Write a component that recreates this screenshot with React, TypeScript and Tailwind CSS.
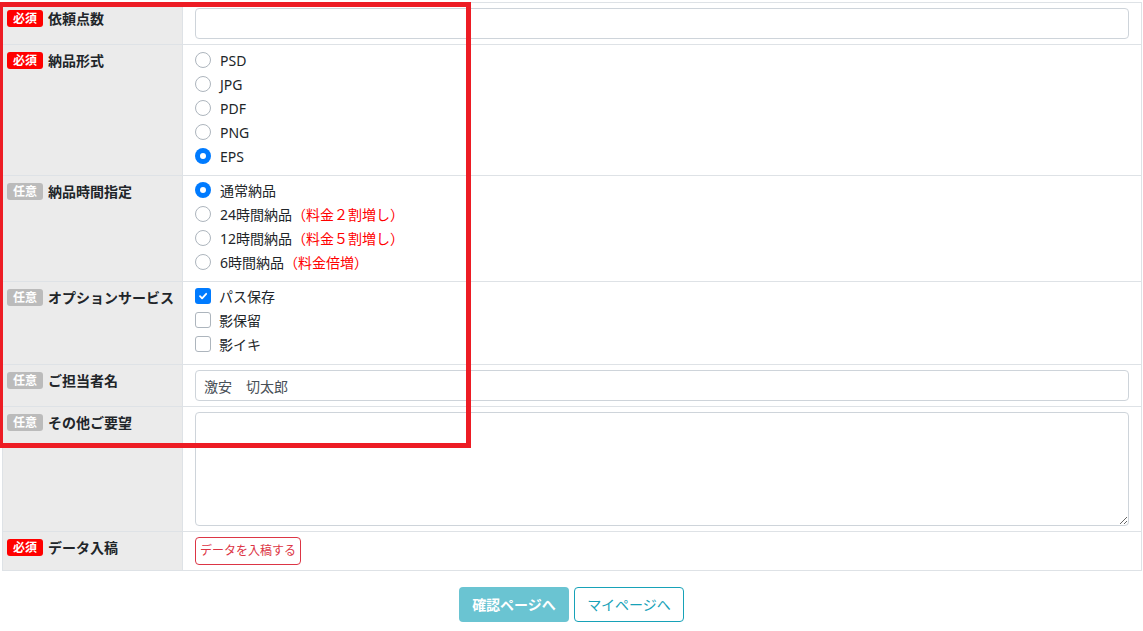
import React from 'react';

const font = 'font-["Noto_Sans","Noto_Sans_CJK_JP",sans-serif]';

// Badge shown before each label
const Badge: React.FC<{ required?: boolean }> = ({ required }) => (
  <span
    className={`inline-flex h-[17px] w-[36px] shrink-0 items-center justify-center rounded-[3px] text-[12px] font-bold leading-none text-white ${
      required ? 'bg-[#ff0000]' : 'bg-[#bbbbbb]'
    }`}
  >
    {required ? '必須' : '任意'}
  </span>
);

const Label: React.FC<{ required?: boolean; text: string }> = ({ required, text }) => (
  <div className="w-[180px] shrink-0 border-r border-[#dee2e6] bg-[#ebebeb] pl-[4px] pt-[7px]">
    <div className="flex items-center gap-[5px]">
      <Badge required={required} />
      <span className="text-[14px] font-bold leading-[16px] text-[#212529]">{text}</span>
    </div>
  </div>
);

const Radio: React.FC<{ checked?: boolean; children: React.ReactNode }> = ({ checked, children }) => (
  <label className="flex h-[24px] items-center gap-[9px] text-[14px] text-[#212529]">
    {checked ? (
      <span className="flex h-[16px] w-[16px] items-center justify-center rounded-full bg-[#007bff]">
        <span className="h-[6px] w-[6px] rounded-full bg-white" />
      </span>
    ) : (
      <span className="h-[16px] w-[16px] rounded-full border border-[#adb5bd] bg-white" />
    )}
    <span>{children}</span>
  </label>
);

const Check: React.FC<{ checked?: boolean; children: React.ReactNode }> = ({ checked, children }) => (
  <label className="flex h-[24px] items-center gap-[8px] text-[14px] text-[#212529]">
    {checked ? (
      <span className="flex h-[16px] w-[16px] items-center justify-center rounded-[3px] bg-[#007bff]">
        <svg width="10" height="10" viewBox="0 0 10 10" fill="none">
          <path d="M2 5.2 4.1 7.3 8.2 2.8" stroke="white" strokeWidth="1.8" strokeLinecap="round" strokeLinejoin="round" />
        </svg>
      </span>
    ) : (
      <span className="h-[16px] w-[16px] rounded-[3px] border border-[#adb5bd] bg-white" />
    )}
    <span>{children}</span>
  </label>
);

const Extra: React.FC<{ children: React.ReactNode }> = ({ children }) => (
  <span className="text-[#ff0000]">{children}</span>
);

export default function App() {
  return (
    <div className={`relative min-h-[631px] w-[1143px] bg-white ${font}`}>
      {/* Form table */}
      <div className="ml-[2px] mt-[2px] w-[1140px] border border-[#dee2e6]">
        {/* 依頼点数 */}
        <div className="flex border-b border-[#dee2e6]">
          <Label required text="依頼点数" />
          <div className="flex-1 py-[5px] pl-[12px] pr-[12px]">
            <input className="h-[31px] w-full rounded-[4px] border border-[#ced4da] px-[8px] text-[14px] outline-none" />
          </div>
        </div>

        {/* 納品形式 */}
        <div className="flex border-b border-[#dee2e6]">
          <Label required text="納品形式" />
          <div className="flex-1 pb-[7px] pl-[12px] pt-[3px]">
            <Radio>PSD</Radio>
            <Radio>JPG</Radio>
            <Radio>PDF</Radio>
            <Radio>PNG</Radio>
            <Radio checked>EPS</Radio>
          </div>
        </div>

        {/* 納品時間指定 */}
        <div className="flex border-b border-[#dee2e6]">
          <Label text="納品時間指定" />
          <div className="flex-1 pb-[7px] pl-[12px] pt-[2px]">
            <Radio checked>通常納品</Radio>
            <Radio>
              24時間納品<Extra>（料金２割増し）</Extra>
            </Radio>
            <Radio>
              12時間納品<Extra>（料金５割増し）</Extra>
            </Radio>
            <Radio>
              6時間納品<Extra>（料金倍増）</Extra>
            </Radio>
          </div>
        </div>

        {/* オプションサービス */}
        <div className="flex border-b border-[#dee2e6]">
          <Label text="オプションサービス" />
          <div className="flex-1 pb-[8px] pl-[12px] pt-[2px]">
            <Check checked>パス保存</Check>
            <Check>影保留</Check>
            <Check>影イキ</Check>
          </div>
        </div>

        {/* ご担当者名 */}
        <div className="flex border-b border-[#dee2e6]">
          <Label text="ご担当者名" />
          <div className="flex-1 py-[5px] pl-[12px] pr-[12px]">
            <input
              defaultValue="激安　切太郎"
              className="h-[31px] w-full rounded-[4px] border border-[#ced4da] px-[8px] text-[14px] text-[#495057] outline-none"
            />
          </div>
        </div>

        {/* その他ご要望 */}
        <div className="flex border-b border-[#dee2e6]">
          <Label text="その他ご要望" />
          <div className="flex-1 py-[5px] pl-[12px] pr-[12px]">
            <textarea className="block h-[114px] w-full rounded-[4px] border border-[#ced4da] px-[8px] text-[14px] outline-none" />
          </div>
        </div>

        {/* データ入稿 */}
        <div className="flex">
          <Label required text="データ入稿" />
          <div className="flex-1 py-[5px] pl-[12px]">
            <button className="h-[28px] rounded-[4px] border border-[#dc3545] bg-white px-[4px] text-[12px] text-[#dc3545]">
              データを入稿する
            </button>
          </div>
        </div>
      </div>

      {/* Footer buttons */}
      <div className="mt-[16px] flex justify-center gap-[5px]">
        <button className="h-[35px] w-[110px] rounded-[4px] bg-[#6ac4d2] text-[14px] font-bold text-white">
          確認ページへ
        </button>
        <button className="h-[35px] w-[110px] rounded-[4px] border border-[#17a2b8] bg-white text-[14px] text-[#17a2b8]">
          マイページへ
        </button>
      </div>

      {/* Red annotation frame */}
      <div className="pointer-events-none absolute left-[-2px] top-0 h-[446px] w-[473px] border-[5px] border-[#ed1c24]" />
    </div>
  );
}
